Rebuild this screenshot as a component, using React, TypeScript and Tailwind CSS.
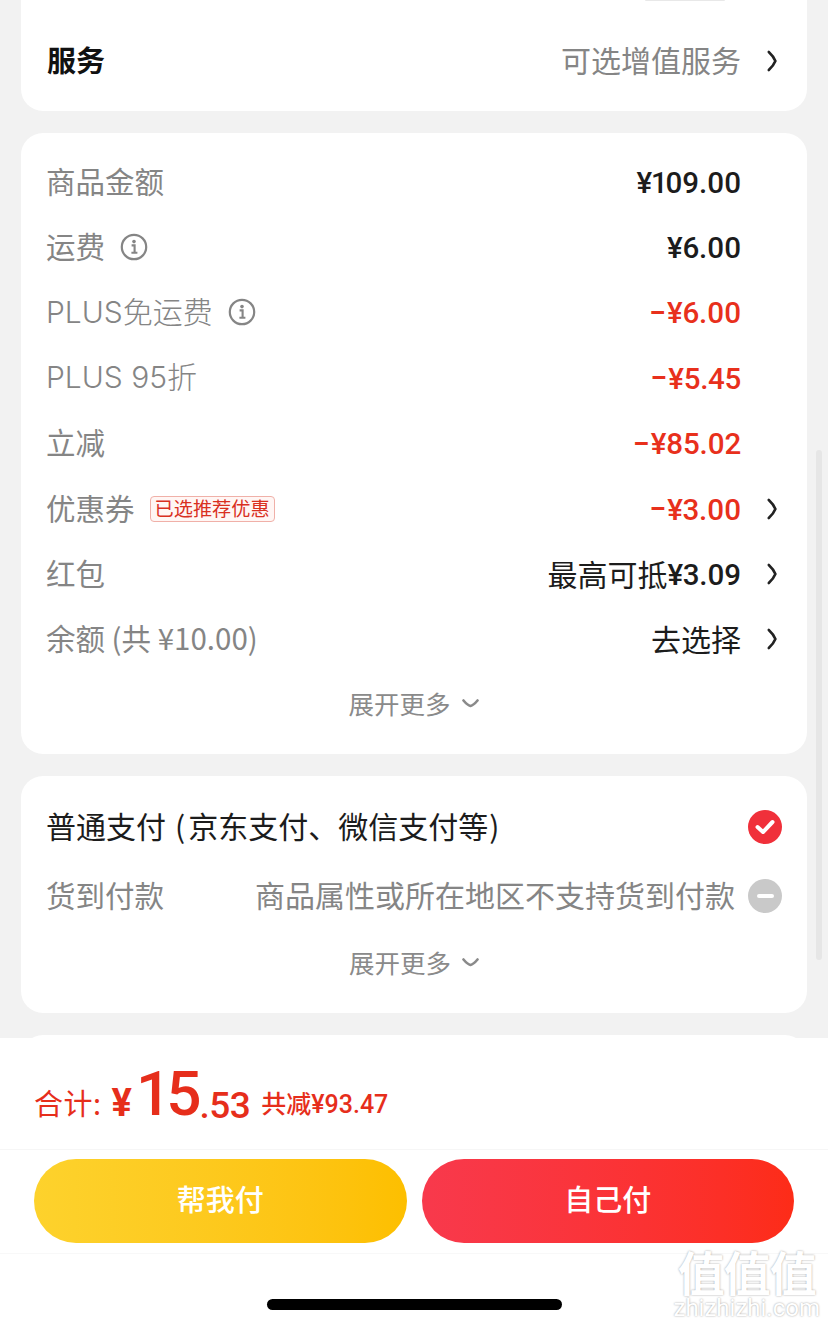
import React from "react";

const cjk = '"Noto Sans CJK SC", sans-serif';
const num = 'Roboto, "Noto Sans CJK SC", sans-serif';
const latin = 'Inter, "Noto Sans CJK SC", sans-serif';

function Chevron() {
  return (
    <svg width="12" height="22" viewBox="0 0 12 22" fill="none" className="shrink-0">
      <path d="M2.8 2C5.5 4.5 8 7.5 9.4 11C8 14.5 5.5 17.5 2.8 20" stroke="#222" strokeWidth="2.6" strokeLinecap="round" strokeLinejoin="round" />
    </svg>
  );
}

function Info() {
  return (
    <svg width="28" height="28" viewBox="0 0 28 28" fill="none" className="shrink-0">
      <circle cx="14" cy="14" r="12.2" stroke="#858585" strokeWidth="2.2" />
      <circle cx="14" cy="8.6" r="1.8" fill="#858585" />
      <path d="M11.6 12.4H14.6V19.6M11.4 19.8H17.4" stroke="#858585" strokeWidth="2.1" />
    </svg>
  );
}

function More() {
  return (
    <div className="flex items-center justify-center gap-[11px] text-[25.5px] leading-[36px] text-[#8a8a8a]">
      <span>展开更多</span>
      <svg width="17" height="9" viewBox="0 0 17 9" fill="none">
        <path d="M1.5 1.5C4 4.5 6 6.5 8.5 7C11 6.5 13 4.5 15.5 1.5" stroke="#8a8a8a" strokeWidth="2.6" strokeLinecap="round" />
      </svg>
    </div>
  );
}

function Row({ label, prefix, value, red, chevron, labelFont, children }: { label: string; prefix?: string; value: string; red?: boolean; chevron?: boolean; labelFont?: string; children?: React.ReactNode }) {
  const negative = value.startsWith("-");
  return (
    <div className="flex h-[65.4px] items-center">
      <span
        className={`${labelFont ? "text-[30px]" : "pb-[4px] text-[29.5px]"} text-[#858585] whitespace-nowrap`}
        style={labelFont ? { fontFamily: labelFont, fontWeight: 300 } : undefined}
      >
        {label}
      </span>
      {children}
      {prefix ? <span className="ml-auto pb-[2px] text-[30px] text-[#1c1c1c] whitespace-nowrap">{prefix}</span> : null}
      <span
        className={`${prefix ? "" : "ml-auto"} flex items-center pt-[2px] text-[29.5px] font-medium whitespace-nowrap proportional-nums ${red ? "text-[#e8301c]" : "text-[#1c1c1c]"}`}
        style={{ fontFamily: num, letterSpacing: "-0.3px" }}
      >
        {negative ? <span className="mr-[2px] text-[25px] font-bold">–</span> : null}
        {negative ? value.slice(1) : value}
      </span>
      <span className="flex w-[40px] justify-end pr-[3px]">{chevron ? <Chevron /> : null}</span>
    </div>
  );
}

export default function App() {
  return (
    <div className="relative h-[1327px] w-[828px] overflow-hidden bg-[#f2f2f2]" style={{ fontFamily: cjk }}>
      <div className="flex flex-col gap-[22px] pl-[21px] pr-[21px]">
        {/* Service card */}
        <div className="relative h-[111px] rounded-b-[22px] bg-white pl-[26px] pr-[26px]">
          <div className="absolute right-[82px] top-0 h-[1px] w-[80px] rounded-b bg-[#e8e8e8]" />
          <div className="flex h-[122px] items-center">
            <span className="pb-[2px] text-[29px] font-bold text-[#111]">服务</span>
            <span className="ml-auto pb-[4px] text-[30px] text-[#858585]">可选增值服务</span>
            <span className="flex w-[40px] justify-end pr-[3px]"><Chevron /></span>
          </div>
        </div>

        {/* Price card */}
        <div className="h-[621px] rounded-[22px] bg-white pl-[25px] pr-[26px] pt-[16px]">
          <Row label="商品金额" value="¥109.00" />
          <Row label="运费" value="¥6.00">
            <span className="ml-[15px]"><Info /></span>
          </Row>
          <Row label="PLUS免运费" value="-¥6.00" red labelFont={latin}>
            <span className="ml-[15px]"><Info /></span>
          </Row>
          <Row label="PLUS 95折" value="-¥5.45" red labelFont={latin} />
          <Row label="立减" value="-¥85.02" red />
          <Row label="优惠券" value="-¥3.00" red chevron>
            <span className="ml-[15px] flex h-[26px] items-center rounded-[4px] border border-[#f0b0a8] bg-[#fff6f4] px-[4px] text-[19.2px] leading-none text-[#d9301f] whitespace-nowrap">
              已选推荐优惠
            </span>
          </Row>
          <Row label="红包" prefix="最高可抵" value="¥3.09" chevron />
          <Row label="余额 (共 ¥10.00)" prefix="去选择" value="" chevron />
          <div className="pt-[13px]"><More /></div>
        </div>

        {/* Payment card */}
        <div className="h-[237px] rounded-[22px] bg-white pl-[25px] pr-[25px] pt-[17px]">
          <div className="flex h-[68px] items-center">
            <span className="pb-[4px] text-[30px] text-[#1c1c1c] whitespace-nowrap">普通支付<span className="ml-[9px] mr-[3px]">(</span>京东支付、微信支付等<span className="ml-[1px]">)</span></span>
            <span className="ml-auto flex h-[34px] w-[34px] items-center justify-center rounded-full bg-[#f0303a]">
              <svg width="22" height="18" viewBox="0 0 22 18" fill="none">
                <path d="M3.5 9L9 14L18.5 4" stroke="#fff" strokeWidth="4" strokeLinecap="round" strokeLinejoin="round" />
              </svg>
            </span>
          </div>
          <div className="flex h-[70px] items-center">
            <span className="pb-[4px] text-[29.5px] text-[#858585] whitespace-nowrap">货到付款</span>
            <span className="ml-auto mr-[13px] pb-[4px] text-[30px] text-[#858585] whitespace-nowrap">商品属性或所在地区不支持货到付款</span>
            <span className="flex h-[34px] w-[34px] items-center justify-center rounded-full bg-[#c9c9c9]">
              <span className="h-[4px] w-[17px] rounded-full bg-white" />
            </span>
          </div>
          <div className="pt-[13px]"><More /></div>
        </div>

        <div className="h-[200px] rounded-t-[22px] bg-white" />
      </div>

      {/* Scrollbar */}
      <div className="absolute right-[6px] top-[450px] h-[510px] w-[6px] rounded-full bg-[#e6e6e6]" />

      {/* Footer */}
      <div className="absolute bottom-0 left-0 h-[289px] w-[828px] bg-white">
        <div className="flex h-[112px] items-end border-b border-[#f6f6f6] pl-[34px] pb-[25px] text-[#e62e1b]">
          <span className="mb-[4px] text-[29px] leading-[36px] tracking-[0.5px] whitespace-nowrap">合计:</span>
          <span className="ml-[10px] mb-[2px] text-[38px] leading-[38px] font-bold" style={{ fontFamily: num }}>¥</span>
          <span className="ml-[4px] -mb-[2px] text-[62px] leading-[64px] font-medium tracking-[-5px]" style={{ fontFamily: num }}>15</span>
          <span className="ml-[3px] -mb-[1px] text-[37px] leading-[38px] font-medium tracking-[-0.5px]" style={{ fontFamily: num }}>.53</span>
          <span className="ml-[11px] mb-[2px] text-[25px] leading-[34px] font-medium whitespace-nowrap" style={{ fontFamily: num }}>共减¥93.47</span>
        </div>
        <div className="flex h-[104px] items-center gap-[15px] border-b border-[#f8f8f8] pl-[34px] pr-[34px] pb-[2px]">
          <div className="flex h-[84px] flex-1 items-center justify-center rounded-full bg-gradient-to-r from-[#fdd22c] to-[#fdbf00] pb-[3px] text-[29px] font-medium text-white">帮我付</div>
          <div className="flex h-[84px] flex-1 items-center justify-center rounded-full bg-gradient-to-r from-[#f8394c] to-[#fd2c17] pb-[3px] text-[29px] font-medium text-white">自己付</div>
        </div>
        <div className="flex justify-center pt-[45px]">
          <div className="h-[11px] w-[295px] rounded-full bg-black" />
        </div>
      </div>

      {/* Watermark */}
      <div className="absolute right-[8px] bottom-[8px] flex flex-col items-center leading-none text-white" style={{ textShadow: "0 0 2px #999" }}>
        <span className="text-[47px] font-bold leading-[48px] tracking-[-1px]">值值值</span>
        <span className="mt-[2px] text-[24px] leading-[22px]" style={{ fontFamily: "Roboto, sans-serif" }}>zhizhizhi.com</span>
      </div>
    </div>
  );
}
